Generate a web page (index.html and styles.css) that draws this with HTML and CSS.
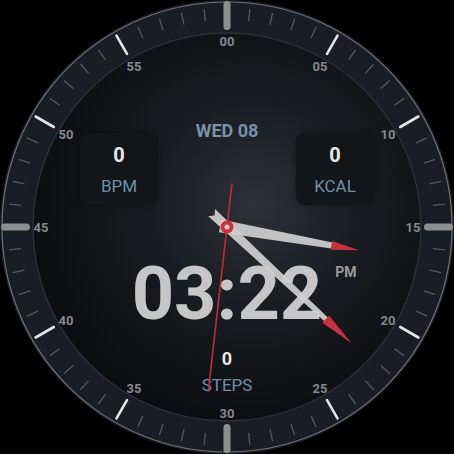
FILE: index.html
```html
<!DOCTYPE html>
<html>
<head>
<meta charset="utf-8">
<link rel="stylesheet" href="styles.css">
</head>
<body>
<div class="watch">
  <svg class="dial" viewBox="0 0 454 454" width="454" height="454">
    <defs>
      <radialGradient id="dialg" cx="0.57" cy="0.44" r="0.6">
        <stop offset="0" stop-color="#2e3237"/>
        <stop offset="0.45" stop-color="#191c20"/>
        <stop offset="1" stop-color="#0a0c0f"/>
      </radialGradient>
      <line id="mi" x1="227" y1="8" x2="227" y2="20" class="minor"/>
      <line id="ma" x1="227" y1="6" x2="227" y2="27" class="major"/>
      <rect id="ca" x="223.5" y="1" width="7" height="29" rx="3.5" class="card"/>
    </defs>
    <circle cx="227" cy="227" r="227" class="bezel"/>
    <circle cx="227" cy="227" r="225" class="rim"/>
    <circle cx="227" cy="227" r="194" fill="url(#dialg)" class="inner"/>
    <use href="#mi" transform="rotate(6 227 227)"/><use href="#mi" transform="rotate(12 227 227)"/><use href="#mi" transform="rotate(18 227 227)"/><use href="#mi" transform="rotate(24 227 227)"/>
    <use href="#mi" transform="rotate(36 227 227)"/><use href="#mi" transform="rotate(42 227 227)"/><use href="#mi" transform="rotate(48 227 227)"/><use href="#mi" transform="rotate(54 227 227)"/>
    <use href="#mi" transform="rotate(66 227 227)"/><use href="#mi" transform="rotate(72 227 227)"/><use href="#mi" transform="rotate(78 227 227)"/><use href="#mi" transform="rotate(84 227 227)"/>
    <use href="#mi" transform="rotate(96 227 227)"/><use href="#mi" transform="rotate(102 227 227)"/><use href="#mi" transform="rotate(108 227 227)"/><use href="#mi" transform="rotate(114 227 227)"/>
    <use href="#mi" transform="rotate(126 227 227)"/><use href="#mi" transform="rotate(132 227 227)"/><use href="#mi" transform="rotate(138 227 227)"/><use href="#mi" transform="rotate(144 227 227)"/>
    <use href="#mi" transform="rotate(156 227 227)"/><use href="#mi" transform="rotate(162 227 227)"/><use href="#mi" transform="rotate(168 227 227)"/><use href="#mi" transform="rotate(174 227 227)"/>
    <use href="#mi" transform="rotate(186 227 227)"/><use href="#mi" transform="rotate(192 227 227)"/><use href="#mi" transform="rotate(198 227 227)"/><use href="#mi" transform="rotate(204 227 227)"/>
    <use href="#mi" transform="rotate(216 227 227)"/><use href="#mi" transform="rotate(222 227 227)"/><use href="#mi" transform="rotate(228 227 227)"/><use href="#mi" transform="rotate(234 227 227)"/>
    <use href="#mi" transform="rotate(246 227 227)"/><use href="#mi" transform="rotate(252 227 227)"/><use href="#mi" transform="rotate(258 227 227)"/><use href="#mi" transform="rotate(264 227 227)"/>
    <use href="#mi" transform="rotate(276 227 227)"/><use href="#mi" transform="rotate(282 227 227)"/><use href="#mi" transform="rotate(288 227 227)"/><use href="#mi" transform="rotate(294 227 227)"/>
    <use href="#mi" transform="rotate(306 227 227)"/><use href="#mi" transform="rotate(312 227 227)"/><use href="#mi" transform="rotate(318 227 227)"/><use href="#mi" transform="rotate(324 227 227)"/>
    <use href="#mi" transform="rotate(336 227 227)"/><use href="#mi" transform="rotate(342 227 227)"/><use href="#mi" transform="rotate(348 227 227)"/><use href="#mi" transform="rotate(354 227 227)"/>
    <use href="#ma" transform="rotate(30 227 227)"/><use href="#ma" transform="rotate(60 227 227)"/><use href="#ma" transform="rotate(120 227 227)"/><use href="#ma" transform="rotate(150 227 227)"/>
    <use href="#ma" transform="rotate(210 227 227)"/><use href="#ma" transform="rotate(240 227 227)"/><use href="#ma" transform="rotate(300 227 227)"/><use href="#ma" transform="rotate(330 227 227)"/>
    <use href="#ca"/><use href="#ca" transform="rotate(90 227 227)"/><use href="#ca" transform="rotate(180 227 227)"/><use href="#ca" transform="rotate(270 227 227)"/>
    <g class="nums">
      <text x="227" y="41">00</text>
      <text x="320" y="66">05</text>
      <text x="388" y="134">10</text>
      <text x="413" y="227">15</text>
      <text x="388" y="320">20</text>
      <text x="320" y="388">25</text>
      <text x="227" y="413">30</text>
      <text x="134" y="388">35</text>
      <text x="66" y="320">40</text>
      <text x="41" y="227">45</text>
      <text x="66" y="134">50</text>
      <text x="134" y="66">55</text>
    </g>
  </svg>

  <div class="face">
    <div class="top">
      <div class="date">WED 08</div>
      <div class="stat stat-left"><span class="val">0</span><span class="lbl">BPM</span></div>
      <div class="stat stat-right"><span class="val">0</span><span class="lbl">KCAL</span></div>
    </div>
    <div class="timerow">
      <div class="time">03:22</div>
      <div class="ampm">PM</div>
    </div>
    <div class="steps"><span class="val">0</span><span class="lbl">STEPS</span></div>
  </div>

  <svg class="hands" viewBox="0 0 454 454" width="454" height="454">
    <g transform="rotate(100 227 227)">
      <polygon class="hand" points="220.5,234 233.5,234 230,119 224,119"/>
      <polygon class="tip" points="222.5,121 231.5,121 227,93"/>
    </g>
    <g transform="rotate(133 227 227)">
      <polygon class="hand" points="222,248 227,244 232,248 229.5,90 224.5,90"/>
      <polygon class="tip" points="222,92 232,92 227,57"/>
    </g>
    <g transform="rotate(186.5 227 227)">
      <line class="sec" x1="227" y1="271" x2="227" y2="61"/>
    </g>
    <circle cx="227" cy="227" r="6.5" class="pivot"/>
    <circle cx="227" cy="227" r="2.5" class="pivot-dot"/>
  </svg>
</div>
</body>
</html>
```

FILE: styles.css
```css
html, body {
  margin: 0;
  padding: 0;
  background: #000;
}

.watch {
  position: relative;
  width: 454px;
  height: 454px;
  overflow: hidden;
  font-family: Roboto, "Liberation Sans", sans-serif;
}

.dial,
.hands {
  position: absolute;
  left: 0;
  top: 0;
}

.hands {
  z-index: 2;
}

.bezel { fill: #1a1e24; }
.rim { fill: none; stroke: #6c7177; stroke-width: 1.2; }
.inner { stroke: #2a2f35; stroke-width: 1.5; }
.minor { stroke: #555a61; stroke-width: 1.3; }
.major { stroke: #e4e4e4; stroke-width: 2.6; stroke-linecap: round; }
.card { fill: #8e8e8e; }

.nums text {
  font-family: Roboto, "Liberation Sans", sans-serif;
  font-weight: 700;
  font-size: 13px;
  fill: #85888c;
  text-anchor: middle;
  dominant-baseline: central;
}

.face {
  position: relative;
  z-index: 1;
  display: flex;
  flex-direction: column;
  align-items: center;
  padding-top: 120px;
}

.top {
  display: grid;
  grid-template-columns: 78px 138px 78px;
  grid-template-rows: 22px 63px;
}

.date {
  grid-column: 2;
  grid-row: 1;
  text-align: center;
  font-size: 18px;
  line-height: 22px;
  font-weight: 700;
  color: #7592aa;
}

.stat {
  grid-row: 1 / 3;
  margin-top: 13px;
  height: 72px;
  box-sizing: border-box;
  padding-top: 10px;
  border-radius: 9px;
  background: #131619;
  box-shadow: 0 0 6px rgba(0, 0, 0, 0.35);
  display: flex;
  flex-direction: column;
  align-items: center;
  gap: 9px;
}

.stat-left { grid-column: 1; }
.stat-right { grid-column: 3; }

.val {
  font-size: 20px;
  line-height: 24px;
  font-weight: 700;
  color: #e8e8e8;
}

.lbl {
  font-size: 17px;
  line-height: 20px;
  color: #6b8fab;
}

.timerow {
  margin-top: 49px;
  width: 100%;
  display: grid;
  grid-template-columns: 1fr auto 1fr;
}

.time {
  grid-column: 2;
  font-size: 74px;
  line-height: 80px;
  font-weight: 700;
  color: #c6c6c6;
}

.ampm {
  grid-column: 3;
  align-self: start;
  margin-top: 10px;
  padding-left: 13px;
  font-size: 14px;
  line-height: 16px;
  font-weight: 700;
  color: #9a9a9a;
}

.steps {
  margin-top: 14px;
  display: flex;
  flex-direction: column;
  align-items: center;
  gap: 5px;
}

.steps .val {
  font-size: 18px;
  line-height: 22px;
}

.steps .lbl {
  font-size: 17px;
}

.hand { fill: #cfcfcf; opacity: 0.92; }
.tip { fill: #c7303f; }
.sec { stroke: #c52a3c; stroke-width: 1.6; }
.pivot { fill: #c93340; }
.pivot-dot { fill: #f2c9cc; }
```
